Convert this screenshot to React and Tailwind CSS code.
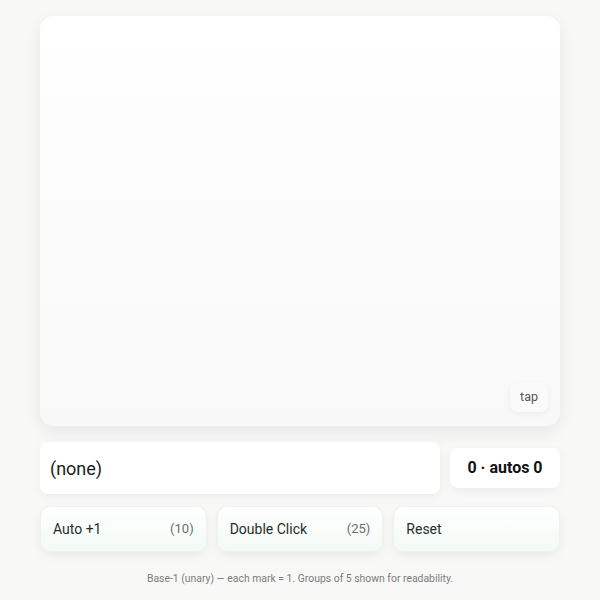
import React from "react";

const Btn = ({ label, count }) => (
  <button className="flex-1 h-[46px] flex items-center justify-between px-3 rounded-[10px] bg-gradient-to-b from-white to-[#f3faf5] border border-[#eef2ee] shadow-[0_4px_10px_rgba(0,0,0,0.06)] text-[14px] text-[#1e2e2a]">
    <span>{label}</span>
    {count && <span className="text-[13px] text-[#6b6f6d]">{count}</span>}
  </button>
);

export default function App() {
  return (
    <div
      className="w-[600px] h-[600px] bg-[#f8f9f7] pt-4 px-10"
      style={{ fontFamily: "Roboto, 'Noto Sans', sans-serif" }}
    >
      <div className="relative h-[410px] rounded-[14px] bg-gradient-to-b from-white to-[#f8f8f8] shadow-[0_6px_16px_rgba(0,0,0,0.07)]">
        <span className="absolute right-3 bottom-[14px] px-[10px] py-[5px] rounded-[8px] bg-[#fafafa] shadow-[0_2px_6px_rgba(0,0,0,0.05)] text-[12.5px] text-[#555]">
          tap
        </span>
      </div>

      <div className="mt-4 flex items-center gap-[10px]">
        <div className="w-[400px] h-[52px] flex items-center px-[10px] rounded-[8px] bg-white shadow-[0_3px_10px_rgba(0,0,0,0.05)] text-[18px] text-[#1b1b1b]">
          (none)
        </div>
        <div className="flex-1 h-[40px] flex items-center justify-center rounded-[8px] bg-white shadow-[0_3px_10px_rgba(0,0,0,0.05)] text-[16px] font-bold text-[#111]">
          0 · autos 0
        </div>
      </div>

      <div className="mt-3 flex gap-[10px]">
        <Btn label="Auto +1" count="(10)" />
        <Btn label="Double Click" count="(25)" />
        <Btn label="Reset" />
      </div>

      <p className="mt-[19px] text-center text-[10.4px] text-[#7a7d7b]">
        Base-1 (unary) — each mark = 1. Groups of 5 shown for readability.
      </p>
    </div>
  );
}
